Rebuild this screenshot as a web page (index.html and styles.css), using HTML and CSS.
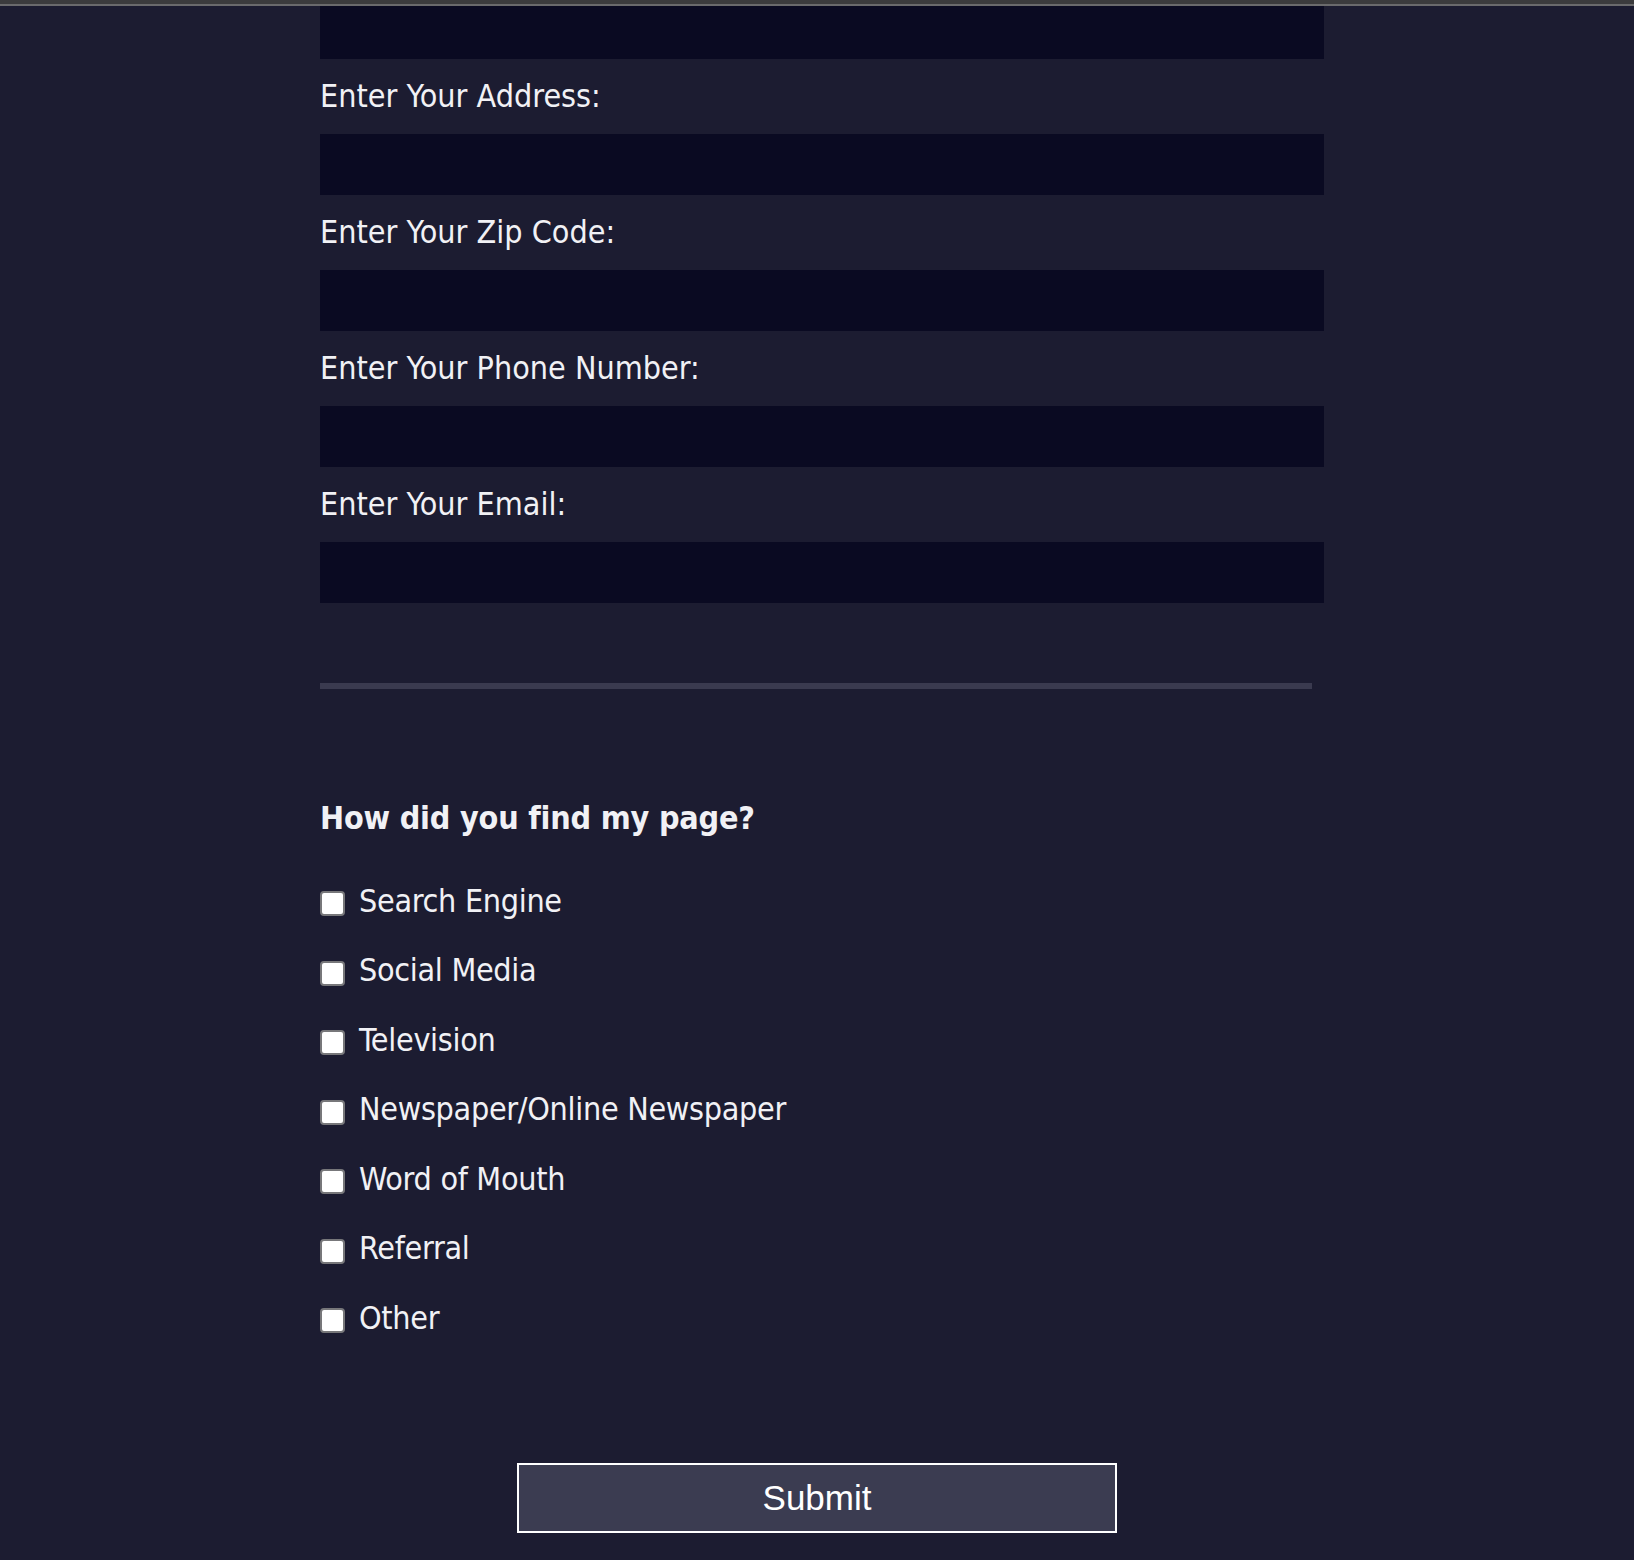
FILE: index.html
```html
<!DOCTYPE html>
<html lang="en">
<head>
<meta charset="utf-8">
<title>Contact form</title>
<link rel="stylesheet" href="styles.css">
</head>
<body>
<div class="topbar"></div>
<main class="page">
  <form class="form">
    <input class="text-input is-cut" type="text">
    <label class="field-label">Enter Your Address:</label>
    <input class="text-input" type="text">
    <label class="field-label">Enter Your Zip Code:</label>
    <input class="text-input" type="text">
    <label class="field-label">Enter Your Phone Number:</label>
    <input class="text-input" type="text">
    <label class="field-label">Enter Your Email:</label>
    <input class="text-input" type="text">

    <hr class="divider">

    <h3 class="question">How did you find my page?</h3>
    <div class="options">
      <label class="option"><input class="check" type="checkbox"><span>Search Engine</span></label>
      <label class="option"><input class="check" type="checkbox"><span>Social Media</span></label>
      <label class="option"><input class="check" type="checkbox"><span>Television</span></label>
      <label class="option"><input class="check" type="checkbox"><span>Newspaper/Online Newspaper</span></label>
      <label class="option"><input class="check" type="checkbox"><span>Word of Mouth</span></label>
      <label class="option"><input class="check" type="checkbox"><span>Referral</span></label>
      <label class="option"><input class="check" type="checkbox"><span>Other</span></label>
    </div>

    <div class="actions">
      <button class="submit" type="button">Submit</button>
    </div>
  </form>
</main>
</body>
</html>
```
FILE: styles.css
```css
html, body {
  margin: 0;
  padding: 0;
}

body {
  background: #1c1c31;
  color: #f1f1f5;
  font-family: "DejaVu Sans Condensed", "DejaVu Sans", sans-serif;
  font-stretch: condensed;
  overflow: hidden;
  height: 1560px;
}

.topbar {
  height: 4px;
  background: #3b3b3d;
  border-bottom: 2px solid #6a6a6c;
}

.page {
  display: flex;
  justify-content: center;
}

.form {
  width: 994px;
  display: flex;
  flex-direction: column;
  align-items: flex-start;
}

.text-input {
  display: block;
  box-sizing: border-box;
  width: 1004px;
  height: 61px;
  margin: 0;
  border: none;
  background: #0a0a22;
  outline: none;
}

.text-input.is-cut {
  height: 53px;
}

.field-label {
  display: block;
  font-size: 32px;
  line-height: 38px;
  margin: 18px 0 19px;
  letter-spacing: 0;
}

.divider {
  width: 992px;
  height: 6px;
  margin: 80px 0 0;
  border: none;
  background: #3a3a4f;
}

.question {
  margin: 110px 0 29px;
  font-size: 32px;
  line-height: 38px;
  font-weight: bold;
  letter-spacing: -0.2px;
}

.options {
  display: flex;
  flex-direction: column;
}

.option {
  display: flex;
  align-items: center;
  height: 69.5px;
  font-size: 32px;
  line-height: 38px;
  letter-spacing: -0.3px;
}

.check {
  appearance: none;
  -webkit-appearance: none;
  box-sizing: border-box;
  width: 25px;
  height: 25px;
  margin: 6px 14px 0 0;
  border: 2px solid #77777a;
  border-radius: 4px;
  background: #ffffff;
}

.actions {
  align-self: stretch;
  display: flex;
  justify-content: center;
  margin-top: 110px;
}

.submit {
  box-sizing: border-box;
  width: 600px;
  height: 70px;
  border: 2px solid #ffffff;
  background: #3b3c51;
  color: #ffffff;
  font-family: "Liberation Sans", Arial, sans-serif;
  font-size: 35px;
  padding: 0;
}
```
